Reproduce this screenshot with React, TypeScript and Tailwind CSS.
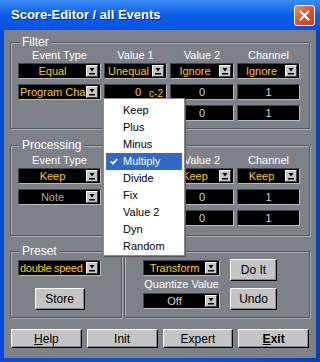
import React from "react";

const GRAY = "bg-[#7e8288]";

function Arrow() {
  return (
    <div className="w-[12px] h-[12px] mr-[2px] shrink-0 bg-[#c6c6c6] border border-t-white border-l-white border-b-[#404040] border-r-[#404040] flex items-center justify-center">
      <svg width="8" height="8" viewBox="0 0 8 8">
        <polygon points="1.5,1 6.5,1 4,4.5" fill="#000" />
        <rect x="1" y="6" width="6" height="1.5" fill="#000" />
      </svg>
    </div>
  );
}

const field =
  "h-[16px] bg-black border border-t-[#43464b] border-l-[#43464b] border-b-[#b8bbbf] border-r-[#b8bbbf] flex items-center overflow-hidden";

function Drop({
  text,
  color = "text-[#ffcc00]",
  left = false,
  tight = false,
}: {
  text: string;
  color?: string;
  left?: boolean;
  tight?: boolean;
}) {
  return (
    <div className={field}>
      <span
        className={`flex-1 min-w-0 whitespace-nowrap overflow-hidden px-[1px] ${color} ${left ? "text-left" : "text-center"} ${tight ? "tracking-[-0.3px]" : ""}`}
      >
        {text}
      </span>
      <Arrow />
    </div>
  );
}

function Num({ children }: { children?: React.ReactNode }) {
  return <div className={`${field} justify-center text-[#d4d4d4]`}>{children}</div>;
}

function Btn({ children, className = "" }: { children: React.ReactNode; className?: string }) {
  return (
    <div
      className={`bg-[#c4c4c4] border border-t-white border-l-white border-b-black border-r-black shadow-[inset_-1px_-1px_0_#8a8a8a] flex items-center justify-center text-black text-[12px] font-['Liberation_Sans_Narrow','Liberation_Sans',sans-serif] ${className}`}
    >
      {children}
    </div>
  );
}

const group =
  "border border-[#55585e] shadow-[inset_1px_1px_0_#a9acb1,1px_1px_0_#a9acb1]";

function Legend({ children }: { children: React.ReactNode }) {
  return (
    <legend className={`ml-[2px] px-[2px] text-white text-[12px] leading-[13px] ${GRAY}`}>
      {children}
    </legend>
  );
}

function Headers({ cols }: { cols: string[] }) {
  return (
    <div className="grid grid-cols-[83px_63px_64px_63px] gap-x-[3px] h-[12px] leading-[12px] text-white text-center mb-[2px]">
      {cols.map((c, i) => (
        <span key={i}>{c}</span>
      ))}
    </div>
  );
}

const menuItems = ["Keep", "Plus", "Minus", "Multiply", "Divide", "Fix", "Value 2", "Dyn", "Random"];

export default function App() {
  return (
    <div className="w-[320px] h-[362px] flex flex-col bg-gradient-to-r from-[#0a4ad6] via-[#0b52df] to-[#0840c4] font-['Liberation_Sans',Arial,sans-serif] text-[11px] select-none">
      <div className="h-[30px] shrink-0 flex items-center pl-[11px] pr-[5px] bg-gradient-to-b from-[#3b8cf5] via-[#0a5de9] to-[#0653e0]">
        <span className="flex-1 text-white font-bold text-[13px] [text-shadow:1px_1px_0_#0a2a86]">
          Score-Editor / all Events
        </span>
        <div className="w-[21px] h-[21px] rounded-[3px] border border-white bg-gradient-to-br from-[#f08a68] via-[#e0522e] to-[#c63b17] flex items-center justify-center">
          <svg width="11" height="11" viewBox="0 0 11 11">
            <path d="M1.5 1.5 L9.5 9.5 M9.5 1.5 L1.5 9.5" stroke="#fff" strokeWidth="2" strokeLinecap="square" />
          </svg>
        </div>
      </div>

      <div className={`flex-1 mx-[4px] mb-[4px] ${GRAY} relative flex flex-col px-[6px] pt-[6px]`}>
        <fieldset className={`${group} px-[7px] pb-[7px]`}>
          <Legend>Filter</Legend>
          <Headers cols={["Event Type", "Value 1", "Value 2", "Channel"]} />
          <div className="grid grid-cols-[83px_63px_64px_63px] gap-x-[3px] gap-y-[5px]">
            <Drop text="Equal" />
            <Drop text="Unequal" />
            <Drop text="Ignore" />
            <Drop text="Ignore" />
            <Drop text="Program Change" left />
            <div className={`${field} justify-end pr-[3px] text-[#ffcc00]`}>
              <span>0</span>
              <span className="ml-[8px] text-[10px] mt-[2px]">c-2</span>
            </div>
            <Num>0</Num>
            <Num>1</Num>
            <div />
            <Num />
            <Num>0</Num>
            <Num>1</Num>
          </div>
        </fieldset>

        <fieldset className={`${group} mt-[10px] px-[7px] pb-[9px]`}>
          <Legend>Processing</Legend>
          <div className="mt-[2px]">
            <Headers cols={["Event Type", "", "Value 2", "Channel"]} />
          </div>
          <div className="grid grid-cols-[83px_63px_64px_63px] gap-x-[3px] gap-y-[5px]">
            <Drop text="Keep" />
            <Num />
            <Drop text="Keep" />
            <Drop text="Keep" />
            <Drop text="Note" color="text-[#a8a8a8]" />
            <Num />
            <Num>0</Num>
            <Num>1</Num>
            <div />
            <Num />
            <Num>0</Num>
            <Num>1</Num>
          </div>
        </fieldset>

        <div className="flex items-stretch gap-[2px] mt-[9px]">
          <fieldset className={`${group} w-[112px] pl-[7px] pb-[7px]`}>
            <Legend>Preset</Legend>
            <div className="w-[83px] mt-[2px] flex flex-col items-center">
              <div className="w-full">
                <Drop text="double speed" left tight />
              </div>
              <Btn className="mt-[12px] w-[50px] h-[22px]">Store</Btn>
            </div>
          </fieldset>
          <div className={`${group} flex-1 mt-[6px] flex pl-[18px] gap-[10px]`}>
            <div className="w-[77px] pt-[8px] flex flex-col">
              <Drop text="Transform" />
              <div className="h-[16px] leading-[16px] text-white text-center whitespace-nowrap">Quantize Value</div>
              <div className="mt-[1px]">
                <Drop text="Off" color="text-[#d4d4d4]" />
              </div>
            </div>
            <div className="w-[47px] flex flex-col">
              <Btn className="mt-[7px] h-[22px]">Do It</Btn>
              <Btn className="mt-[7px] h-[22px]">Undo</Btn>
            </div>
          </div>
        </div>

        <div className="grid grid-cols-4 gap-[5px] px-[1px] mt-[11px]">
          <Btn className="h-[19px]">
            <span>
              <span className="underline">H</span>elp
            </span>
          </Btn>
          <Btn className="h-[19px]">Init</Btn>
          <Btn className="h-[19px]">Expert</Btn>
          <Btn className="h-[19px] font-bold">
            <span>
              <span className="underline">E</span>xit
            </span>
          </Btn>
        </div>

        <div className="absolute left-[99px] top-[68px] w-[82px] h-[158px] z-10 bg-white border border-[#8c8c8c] shadow-[1px_1px_0_#555] px-[2px] pt-[3px]">
          {menuItems.map((m) => (
            <div
              key={m}
              className={`relative h-[17px] flex items-center pl-[17px] text-[11px] ${m === "Multiply" ? "bg-[#316ac5] text-white" : "text-black"}`}
            >
              {m === "Multiply" && (
                <svg className="absolute left-[4px] top-[5px]" width="8" height="7" viewBox="0 0 8 7">
                  <path d="M0.8 3.4 L3 5.6 L7.2 1" stroke="#fff" strokeWidth="1.8" fill="none" />
                </svg>
              )}
              {m}
            </div>
          ))}
        </div>
      </div>
    </div>
  );
}
